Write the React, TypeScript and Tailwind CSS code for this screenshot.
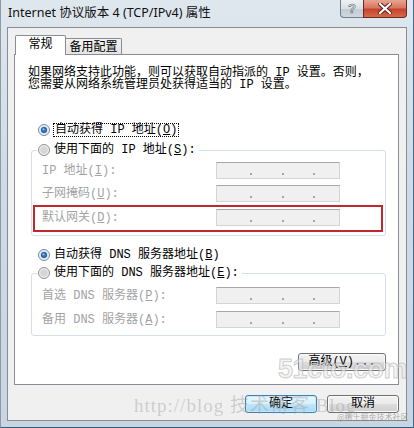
import React from "react";

const BODY = "font-['Liberation_Mono','Noto_Sans_CJK_SC',monospace]";

function Radio({ checked }: { checked?: boolean }) {
  return (
    <svg width="12" height="12" viewBox="0 0 12 12" className="shrink-0">
      <circle cx="6" cy="6" r="5.5" fill="#f2f2f2" stroke={checked ? "#6d8aa8" : "#8e8f8f"} />
      <circle cx="6" cy="6" r="4.2" fill={checked ? "#dfe9f3" : "#e2e2e2"} />
      <circle cx="6" cy="6" r="3.4" fill={checked ? "#c5d6e8" : "#d6d6d6"} />
      {checked && (
        <>
          <circle cx="6" cy="6" r="3" fill="#1f5b98" />
          <circle cx="6" cy="6" r="1.8" fill="#3f86cc" />
          <circle cx="5.4" cy="5.2" r="0.9" fill="#9cc8f0" />
        </>
      )}
    </svg>
  );
}

function IpBox() {
  return (
    <div className="w-[124px] h-[17px] border border-[#d4d4d4] border-t-[#a8a8a8] bg-[#f0f0f0] flex items-end pb-[3px] shrink-0">
      <div className="ml-[33px] w-[2px] h-[2px] bg-[#a6a6a6]" />
      <div className="ml-[30px] w-[2px] h-[2px] bg-[#a6a6a6]" />
      <div className="ml-[29px] w-[2px] h-[2px] bg-[#a6a6a6]" />
    </div>
  );
}

function FieldRow({ label, pl = "pl-[10px]" }: { label: React.ReactNode; pl?: string }) {
  return (
    <div className={`flex items-center h-[17px] ${pl}`}>
      <div className="w-[174px] text-[#a3a3a3] whitespace-nowrap leading-[12px]">{label}</div>
      <IpBox />
    </div>
  );
}

function Btn({ children, def, w }: { children: React.ReactNode; def?: boolean; w: string }) {
  return (
    <div
      className={`${w} h-[18px] rounded-[3px] border flex items-center justify-center text-[12px] leading-none text-black ${
        def
          ? "border-[#3c7fb1] bg-[linear-gradient(#eaf6fd_0%,#d9f0fc_50%,#bee6fd_51%,#a7d9f5_100%)] shadow-[inset_0_0_0_1px_#c6e8fa]"
          : "border-[#707070] bg-[linear-gradient(#f2f2f2_0%,#ebebeb_50%,#dddddd_51%,#cfcfcf_100%)] shadow-[inset_0_0_0_1px_#fbfbfb]"
      }`}
    >
      {children}
    </div>
  );
}

export default function App() {
  return (
    <div
      className={`relative w-[414px] h-[428px] overflow-hidden flex flex-col border-l border-l-[#8d9aa6] border-r border-r-[#3f6c8c] border-b border-b-[#2f5f80] bg-[linear-gradient(180deg,#dfe7ee_0%,#cfdbe6_40%,#c9d6e2_100%)] ${BODY} text-[12px] text-black`}
    >
      {/* title bar */}
      <div className="h-[27px] flex items-start shrink-0">
        <div className="flex-1 pl-[7px] h-[27px] flex items-center font-['Noto_Sans','Noto_Sans_CJK_SC',sans-serif] text-[12.5px] text-[#111] whitespace-nowrap">
          Internet 协议版本 4 (TCP/IPv4) 属性
        </div>
        <div className="flex mr-[6px]">
          <div className="w-[23px] h-[18px] border border-[#707f8d] border-t-0 border-r-0 rounded-bl-[4px] bg-[linear-gradient(#edf1f4_0%,#d9e0e6_50%,#c1cbd4_51%,#cfd8e0_100%)] flex items-center justify-center">
            <span className="font-['Liberation_Sans',sans-serif] font-bold text-[13px] leading-none text-[#f4f6f8] [-webkit-text-stroke:0.6px_#59646e]">?</span>
          </div>
          <div className="w-[44px] h-[18px] border border-[#6b2a20] border-t-0 rounded-br-[4px] bg-[linear-gradient(#e8a592_0%,#d77760_45%,#c5432b_55%,#d66a4c_100%)] flex items-center justify-center">
            <svg width="14" height="11" viewBox="0 0 14 11">
              <path d="M2 1 L12 10 M12 1 L2 10" stroke="#5a1f15" strokeWidth="4" strokeLinecap="square" />
              <path d="M2 1 L12 10 M12 1 L2 10" stroke="#ffffff" strokeWidth="2.2" strokeLinecap="square" />
            </svg>
          </div>
        </div>
      </div>

      {/* client area */}
      <div className="ml-[6px] w-[400px] h-[394px] border border-[#848e98] bg-[#f0f0f0] flex flex-col shrink-0">
        {/* tabs */}
        <div className="mt-[7px] ml-[7px] h-[20px] -mb-[1px] flex items-end">
          <div className="relative z-10 w-[51px] h-[20px] border border-b-0 border-[#898c95] rounded-t-[2px] bg-white flex items-center justify-center text-[12px] pb-[1px]">
            常规
          </div>
          <div className="w-[56px] h-[17px] border border-l-0 border-b-0 border-[#898c95] rounded-tr-[2px] bg-[linear-gradient(#f2f2f2,#e3e3e3)] flex items-center justify-center text-[12px] pt-[1px]">
            备用配置
          </div>
        </div>

        {/* panel */}
        <div className="ml-[6px] w-[385px] h-[331px] border border-[#898c95] bg-white flex flex-col">
          <div className="mt-[12px] pl-[13px] leading-[12px] whitespace-nowrap">
            如果网络支持此功能，则可以获取自动指派的 IP 设置。否则，
            <br />
            您需要从网络系统管理员处获得适当的 IP 设置。
          </div>

          <div className="mt-[31px] pl-[23px] h-[16px] flex items-center">
            <Radio checked />
            <span className="ml-[3px] border border-dotted border-black px-[1px] leading-[12px] whitespace-nowrap">
              自动获得 IP 地址(<u>O</u>)
            </span>
          </div>

          {/* group 1 */}
          <div className="relative mt-[12px] ml-[16px] w-[355px] h-[86px] border border-[#d5dfe5] rounded-[3px] pt-[11px]">
            <div className="absolute -top-[9px] left-[5px] h-[16px] pl-[1px] pr-[3px] bg-white flex items-center whitespace-nowrap">
              <Radio />
              <span className="ml-[4px] leading-[12px]">
                使用下面的 IP 地址(<u>S</u>):
              </span>
            </div>
            <FieldRow label={<>IP 地址(<u>I</u>):</>} />
            <div className="mt-[6px]">
              <FieldRow label={<>子网掩码(<u>U</u>):</>} />
            </div>
            <div className="mt-[3px] ml-[1px] mr-[2px] border-2 border-[#c4262e] pt-[2px] pb-[4px]">
              <FieldRow pl="pl-[7px]" label={<>默认网关(<u>D</u>):</>} />
            </div>
          </div>

          <div className="mt-[11px] pl-[23px] h-[16px] flex items-center">
            <Radio checked />
            <span className="ml-[4px] leading-[12px] whitespace-nowrap">
              自动获得 DNS 服务器地址(<u>B</u>)
            </span>
          </div>

          {/* group 2 */}
          <div className="relative mt-[10px] ml-[16px] w-[355px] h-[63px] border border-[#d5dfe5] rounded-[3px] pt-[13px]">
            <div className="absolute -top-[9px] left-[5px] h-[16px] pl-[1px] pr-[3px] bg-white flex items-center whitespace-nowrap">
              <Radio />
              <span className="ml-[4px] leading-[12px]">
                使用下面的 DNS 服务器地址(<u>E</u>):
              </span>
            </div>
            <FieldRow label={<>首选 DNS 服务器(<u>P</u>):</>} />
            <div className="mt-[7px]">
              <FieldRow label={<>备用 DNS 服务器(<u>A</u>):</>} />
            </div>
          </div>

          <div className="mt-[17px] self-end mr-[12px]">
            <Btn w="w-[88px]">
              高级(<u>V</u>)...
            </Btn>
          </div>
        </div>

        {/* bottom buttons */}
        <div className="mt-[10px] mr-[7px] flex justify-end gap-[10px]">
          <Btn def w="w-[72px]">
            确定
          </Btn>
          <Btn w="w-[72px]">取消</Btn>
        </div>
      </div>

      {/* watermarks */}
      <div className="pointer-events-none absolute left-[277px] top-[356px] font-['Liberation_Sans',sans-serif] font-bold text-[27px] leading-none tracking-[-0.5px] text-[rgba(235,235,235,0.55)] [-webkit-text-stroke:1px_rgba(170,170,170,0.55)]">
        51cto.com
      </div>
      <div className="pointer-events-none absolute left-[133px] top-[396px] font-['Liberation_Serif','Noto_Sans_CJK_SC',serif] text-[19px] leading-none tracking-[1px] text-[rgba(160,160,160,0.45)] whitespace-nowrap">
        http://blog 技术博客 Blog
      </div>
      <div className="pointer-events-none absolute left-[336px] top-[413px] font-['Noto_Sans_CJK_SC',sans-serif] text-[8px] leading-none text-[rgba(120,120,120,0.6)] whitespace-nowrap">
        @稀土掘金技术社区
      </div>
    </div>
  );
}
